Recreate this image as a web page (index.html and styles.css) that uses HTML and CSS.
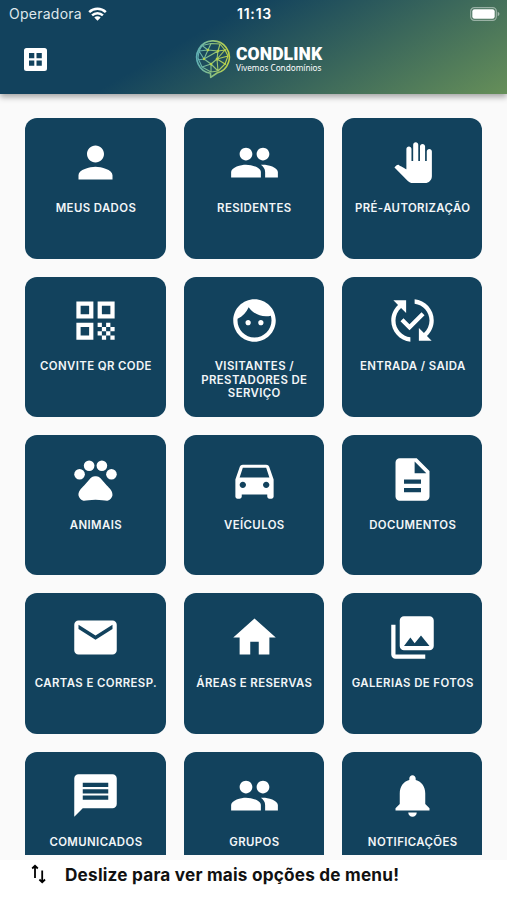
FILE: index.html
```html
<!DOCTYPE html>
<html lang="pt-BR">
<head>
  <meta charset="UTF-8">
  <meta name="viewport" content="width=device-width, initial-scale=1.0">
  <title>Condlink</title>
  <link rel="stylesheet" href="styles.css">
</head>
<body>
  <header class="header">
    <div class="status">
      <div class="carrier">
        <span>Operadora</span>
        <svg class="wifi" viewBox="0 0 19 14">
          <path d="M1.2 5.2a12 12 0 0 1 16.6 0M4.1 8.3a7.8 7.8 0 0 1 10.8 0" fill="none" stroke="#fff" stroke-width="2.5"/>
          <path d="M9.5 13.8l-3.2-3.3a4.6 4.6 0 0 1 6.4 0z" fill="#fff"/>
        </svg>
      </div>
      <div class="time">11:13</div>
      <svg class="battery" viewBox="0 0 30 14">
        <rect x="0.7" y="0.7" width="25.6" height="12.6" rx="3.6" fill="none" stroke="#fff" stroke-opacity=".45" stroke-width="1.2"/>
        <rect x="2.3" y="2.3" width="22.4" height="9.4" rx="2.2" fill="#fff"/>
        <path d="M27.7 4.8c2.3.8 2.3 3.6 0 4.4z" fill="#fff" fill-opacity=".5"/>
      </svg>
    </div>
    <div class="toolbar">
      <svg class="grid-icon" viewBox="0 0 23 23">
        <path fill="#fff" fill-rule="evenodd" d="M2.5 0h18A2.5 2.5 0 0 1 23 2.5v18a2.5 2.5 0 0 1-2.5 2.5h-18A2.5 2.5 0 0 1 0 20.5v-18A2.5 2.5 0 0 1 2.5 0zM5 5v5.3h5.3V5zM12.5 5v5.3h5.3V5zM5 12.5v5.3h5.3v-5.3zM12.5 12.5v5.3h5.3v-5.3z"/>
      </svg>
      <div class="logo">
        <svg class="logo-mark" viewBox="0 0 36 40">
          <defs>
            <linearGradient id="mark" x1="0" y1="0" x2="1" y2="0">
              <stop offset="0" stop-color="#5fb0b4"/>
              <stop offset="1" stop-color="#bfd245"/>
            </linearGradient>
          </defs>
          <g fill="none" stroke="url(#mark)" stroke-linejoin="round">
            <path stroke-width="1.6" d="M15.5 34.3A16.3 16.3 0 1 1 22 34L15.7 38.3z"/>
            <path stroke-width="1.1" d="M7 6.5l9-2 9 .5 5 6 3 6-3 8-7 7-7 1-9-5-4-9 1-7zM16 4.5l-3 6.5-9 1 5 8-6 1M13 11l-4 9 7 5-9 3M13 11l10 1 2-7M23 12l7-1M23 12l-1 8-6 5M22 20l8 5M22 20l11-3M23 12l-14 8M16 25v8M16 25l7 7M22 20l1 12M7 6.5l6 4.5M30 11l-8 9"/>
          </g>
          <g fill="#b4d24b">
            <circle cx="13" cy="11" r="1.3"/>
            <circle cx="23" cy="12" r="1.3"/>
            <circle cx="22" cy="20" r="1.3"/>
            <circle cx="16" cy="25" r="1.3"/>
            <circle cx="30" cy="11" r="1.1"/>
            <circle cx="30" cy="25" r="1.1"/>
            <circle cx="9" cy="20" r="1.2"/>
          </g>
        </svg>
        <div class="logo-text">
          <div class="brand">CONDLINK</div>
          <div class="slogan">Vivemos Condomínios</div>
        </div>
      </div>
    </div>
  </header>

  <main class="menu">
    <div class="card">
      <svg class="icon" viewBox="0 0 24 24"><path d="M12 12c2.21 0 4-1.79 4-4s-1.79-4-4-4-4 1.79-4 4 1.79 4 4 4zm0 2c-2.67 0-8 1.34-8 4v2h16v-2c0-2.66-5.33-4-8-4z"/></svg>
      <span>MEUS DADOS</span>
    </div>
    <div class="card">
      <svg class="icon" viewBox="0 0 24 24"><path id="people" d="M16 11c1.66 0 2.99-1.34 2.99-3S17.66 5 16 5c-1.66 0-3 1.34-3 3s1.34 3 3 3zm-8 0c1.66 0 2.99-1.34 2.99-3S9.66 5 8 5C6.34 5 5 6.34 5 8s1.34 3 3 3zm0 2c-2.33 0-7 1.17-7 3.5V19h14v-2.5c0-2.33-4.67-3.5-7-3.5zm8 0c-.29 0-.62.02-.97.05 1.16.84 1.97 1.97 1.97 3.45V19h6v-2.5c0-2.33-4.67-3.5-7-3.5z"/></svg>
      <span>RESIDENTES</span>
    </div>
    <div class="card">
      <svg class="icon" viewBox="-3.4 -3.1 30 30"><path d="M23 5.5V20c0 2.2-1.8 4-4 4h-7.3c-1.08 0-2.1-.43-2.85-1.19L1 14.83s1.26-1.23 1.3-1.25c.22-.19.49-.29.79-.29.22 0 .42.06.6.16.04.01 4.31 2.46 4.31 2.46V4c0-.83.67-1.5 1.5-1.5S11 3.17 11 4v7h1V1.5c0-.83.67-1.5 1.5-1.5S15 .67 15 1.5V11h1V2.5c0-.83.67-1.5 1.5-1.5s1.5.67 1.5 1.5V11h1V5.5c0-.83.67-1.5 1.5-1.5s1.5.67 1.5 1.5z"/></svg>
      <span>PRÉ-AUTORIZAÇÃO</span>
    </div>
    <div class="card">
      <svg class="icon" viewBox="0 0 24 24"><path d="M3 11h8V3H3v8zm2-6h4v4H5V5zM3 21h8v-8H3v8zm2-6h4v4H5v-4zM13 3v8h8V3h-8zm6 6h-4V5h4v4zM19 19h2v2h-2zM13 13h2v2h-2zM15 15h2v2h-2zM13 17h2v2h-2zM15 19h2v2h-2zM17 17h2v2h-2zM17 13h2v2h-2zM19 15h2v2h-2z"/></svg>
      <span>CONVITE QR CODE</span>
    </div>
    <div class="card">
      <svg class="icon" viewBox="0 0 24 24"><path d="M9 11.75c-.69 0-1.25.56-1.25 1.25s.56 1.25 1.25 1.25 1.25-.56 1.25-1.25-.56-1.25-1.25-1.25zm6 0c-.69 0-1.25.56-1.25 1.25s.56 1.25 1.25 1.25 1.25-.56 1.25-1.25-.56-1.25-1.25-1.25zM12 2C6.48 2 2 6.48 2 12s4.48 10 10 10 10-4.48 10-10S17.52 2 12 2zm0 18c-4.41 0-8-3.59-8-8 0-.29.02-.58.05-.86 2.36-1.05 4.23-2.98 5.21-5.37C11.07 8.33 14.05 10 17.42 10c.78 0 1.53-.09 2.25-.26.21.71.33 1.47.33 2.26 0 4.41-3.59 8-8 8z"/></svg>
      <span>VISITANTES / PRESTADORES DE SERVIÇO</span>
    </div>
    <div class="card">
      <svg class="icon" viewBox="0 0 24 24"><path d="M17.66 9.53l-7.07 7.07-4.24-4.24 1.41-1.41 2.83 2.83 5.66-5.66 1.41 1.41zM4 12c0-2.33 1.02-4.42 2.62-5.88L9 8.5v-6H3l2.2 2.2C3.24 6.52 2 9.11 2 12c0 5.19 3.95 9.45 9 9.95v-2.02c-3.94-.49-7-3.86-7-7.93zm18 0c0-5.19-3.95-9.45-9-9.95v2.02c3.94.49 7 3.86 7 7.93 0 2.33-1.02 4.42-2.62 5.88L15 15.5v6h6l-2.2-2.2c1.96-1.82 3.2-4.41 3.2-7.3z"/></svg>
      <span>ENTRADA / SAIDA</span>
    </div>
    <div class="card">
      <svg class="icon" viewBox="0 0 24 24">
        <circle cx="4.5" cy="9.5" r="2.5"/>
        <circle cx="9" cy="5.5" r="2.5"/>
        <circle cx="15" cy="5.5" r="2.5"/>
        <circle cx="19.5" cy="9.5" r="2.5"/>
        <path d="M17.34 14.86c-.87-1.02-1.6-1.89-2.48-2.91-.46-.54-1.05-1.08-1.75-1.32-.11-.04-.22-.07-.33-.09-.25-.04-.52-.04-.78-.04s-.53 0-.79.05c-.11.02-.22.05-.33.09-.7.24-1.28.78-1.75 1.32-.87 1.02-1.6 1.89-2.48 2.91-1.31 1.31-2.92 2.76-2.62 4.79.29 1.02 1.02 2.03 2.33 2.32.73.15 3.06-.44 5.54-.44h.18c2.48 0 4.81.58 5.54.44 1.31-.29 2.04-1.31 2.33-2.32.31-2.04-1.3-3.49-2.61-4.8z"/>
      </svg>
      <span>ANIMAIS</span>
    </div>
    <div class="card">
      <svg class="icon" viewBox="0 0 24 24"><path d="M18.92 6.01C18.72 5.42 18.16 5 17.5 5h-11c-.66 0-1.21.42-1.42 1.01L3 12v8c0 .55.45 1 1 1h1c.55 0 1-.45 1-1v-1h12v1c0 .55.45 1 1 1h1c.55 0 1-.45 1-1v-8l-2.08-5.99zM6.5 16c-.83 0-1.5-.67-1.5-1.5S5.67 13 6.5 13s1.5.67 1.5 1.5S7.33 16 6.5 16zm11 0c-.83 0-1.5-.67-1.5-1.5s.67-1.5 1.5-1.5 1.5.67 1.5 1.5-.67 1.5-1.5 1.5zM5 11l1.5-4.5h11L19 11H5z"/></svg>
      <span>VEÍCULOS</span>
    </div>
    <div class="card">
      <svg class="icon" viewBox="0 0 24 24"><path d="M14 2H6c-1.1 0-1.99.9-1.99 2L4 20c0 1.1.89 2 1.99 2H18c1.1 0 2-.9 2-2V8l-6-6zm2 16H8v-2h8v2zm0-4H8v-2h8v2zm-3-5V3.5L18.5 9H13z"/></svg>
      <span>DOCUMENTOS</span>
    </div>
    <div class="card">
      <svg class="icon" viewBox="0 0 24 24"><path d="M20 4H4c-1.1 0-1.99.9-1.99 2L2 18c0 1.1.9 2 2 2h16c1.1 0 2-.9 2-2V6c0-1.1-.9-2-2-2zm0 4l-8 5-8-5V6l8 5 8-5v2z"/></svg>
      <span>CARTAS E CORRESP.</span>
    </div>
    <div class="card">
      <svg class="icon" viewBox="0 0 24 24"><path d="M10 20v-6h4v6h5v-8h3L12 3 2 12h3v8z"/></svg>
      <span>ÁREAS E RESERVAS</span>
    </div>
    <div class="card">
      <svg class="icon" viewBox="0 0 24 24"><path d="M22 16V4c0-1.1-.9-2-2-2H8c-1.1 0-2 .9-2 2v12c0 1.1.9 2 2 2h12c1.1 0 2-.9 2-2zm-11-4l2.03 2.71L16 11l4 5H8l3-4zM2 6v14c0 1.1.9 2 2 2h14v-2H4V6H2z"/></svg>
      <span>GALERIAS DE FOTOS</span>
    </div>
    <div class="card">
      <svg class="icon" viewBox="0 0 24 24"><path d="M20 2H4c-1.1 0-1.99.9-1.99 2L2 22l4-4h14c1.1 0 2-.9 2-2V4c0-1.1-.9-2-2-2zm-2 12H6v-2h12v2zm0-3H6V9h12v2zm0-3H6V6h12v2z"/></svg>
      <span>COMUNICADOS</span>
    </div>
    <div class="card">
      <svg class="icon" viewBox="0 0 24 24"><use href="#people"/></svg>
      <span>GRUPOS</span>
    </div>
    <div class="card">
      <svg class="icon" viewBox="0 0 24 24"><path d="M12 22c1.1 0 2-.9 2-2h-4c0 1.1.89 2 2 2zm6-6v-5c0-3.07-1.64-5.64-4.5-6.32V4c0-.83-.67-1.5-1.5-1.5s-1.5.67-1.5 1.5v.68C7.63 5.36 6 7.92 6 11v5l-2 2v1h16v-1l-2-2z"/></svg>
      <span>NOTIFICAÇÕES</span>
    </div>
  </main>

  <footer class="footer">
    <svg class="swap" viewBox="0 0 16 20">
      <path fill="none" stroke="#000" stroke-width="1.8" d="M4 14V1.8M1.2 4.5L4 1.7 6.8 4.5M11.2 6.5v11.7M8.4 15.5l2.8 2.8 2.8-2.8"/>
    </svg>
    <span>Deslize para ver mais opções de menu!</span>
  </footer>
</body>
</html>
```
FILE: styles.css
```css
* {
  box-sizing: border-box;
}
body {
  margin: 0;
  height: 900px;
  display: flex;
  flex-direction: column;
  overflow: hidden;
  background-color: #fff;
  font-family: Inter, "Liberation Sans", sans-serif;
}
svg {
  display: block;
  flex: none;
}
.header {
  flex: none;
  height: 94px;
  color: #fff;
  background: linear-gradient(150deg, #12425d 38%, #668f59 100%);
  box-shadow: 0 3px 6px rgba(0, 0, 0, 0.35);
  z-index: 1;
}
.status {
  display: grid;
  grid-template-columns: 1fr auto 1fr;
  align-items: center;
  height: 27px;
  padding: 0 7px 0 9px;
  font-size: 14px;
}
.carrier {
  display: flex;
  align-items: center;
  gap: 6px;
  letter-spacing: 0.25px;
  color: #dfe8ec;
}
.wifi {
  width: 19px;
  height: 14px;
}
.time {
  font-weight: 600;
  letter-spacing: 0.8px;
}
.battery {
  width: 30px;
  height: 14px;
  justify-self: end;
}
.toolbar {
  display: flex;
  align-items: center;
  height: 65px;
  padding: 0 0 1px 24px;
}
.grid-icon {
  width: 23px;
  height: 23px;
}
.logo {
  display: flex;
  align-items: center;
  margin-left: 148px;
}
.logo-mark {
  width: 36px;
  height: 40px;
}
.logo-text {
  margin-left: 5px;
  white-space: nowrap;
}
.brand {
  font: 900 17.5px/17px Roboto, sans-serif;
  letter-spacing: 0.1px;
}
.slogan {
  font: 8.2px/9px "Noto Sans", sans-serif;
}
.menu {
  height: 761px;
  flex: none;
  display: grid;
  grid-template-columns: repeat(3, 140.3px);
  grid-auto-rows: 140.3px;
  gap: 18.1px;
  padding: 24.3px 25.3px 0;
  overflow: hidden;
  background-color: #fafafa;
}
.card {
  display: flex;
  flex-direction: column;
  align-items: center;
  padding: 18.5px 4px 0 5px;
  border-radius: 12px;
  background-color: #12425d;
  color: #f2f6f8;
  font-size: 11.4px;
  font-weight: 600;
  line-height: 13.5px;
  letter-spacing: 0.4px;
  text-align: center;
}
.card span {
  max-width: 124px;
  margin-top: 14.3px;
}
.icon {
  width: 51px;
  height: 51px;
  fill: #fff;
}
.footer {
  flex: 1;
  display: flex;
  align-items: center;
  gap: 18px;
  padding: 0 31px 12px;
  border-top: 5px solid #fafafa;
  font-size: 17.2px;
  font-weight: 700;
  letter-spacing: 0.2px;
  color: #111;
}
.swap {
  width: 16px;
  height: 20px;
}
```
